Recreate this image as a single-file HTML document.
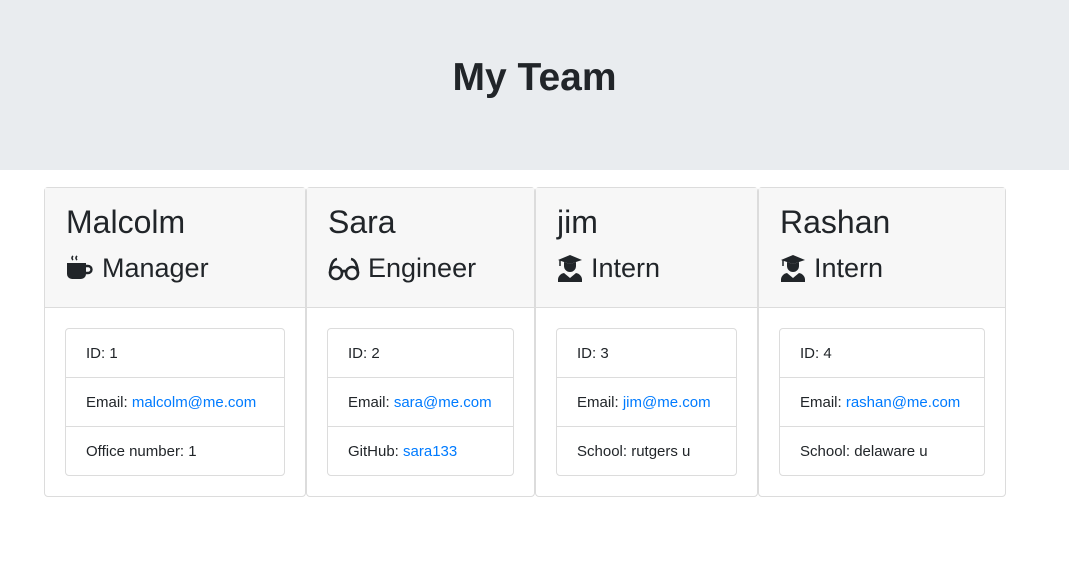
<!DOCTYPE html>
<html><head><style>
body{margin:0;font-family:"Liberation Sans",sans-serif;color:#212529;background:#fff;}
.jt{height:170px;background:#e9ecef;display:flex;align-items:center;justify-content:center;}
.jt h1{margin:0;font-size:39px;font-weight:600;position:relative;top:-7px;}
.row{position:absolute;top:187px;left:44px;display:flex;}
.card{border:1px solid #dcdcdc;border-radius:4px;height:310px;box-sizing:border-box;background:#fff;}
.hd{height:120px;background:#f7f7f7;border-bottom:1px solid #dcdcdc;box-sizing:border-box;padding:14px 20px 0 21px;}
.nm{font-size:32px;font-weight:500;line-height:40px;}
.rl{font-size:27px;font-weight:500;line-height:36px;margin-top:8px;display:flex;align-items:center;}
.rl svg{margin-right:8px;}
.bd{padding:20px;}
ul{list-style:none;margin:0;padding:0;border:1px solid #dcdcdc;border-radius:4px;}
li{height:48px;line-height:50px;padding-left:20px;font-size:15px;border-top:1px solid #dcdcdc;}
li:first-child{border-top:0;}
a{color:#007bff;text-decoration:none;}
</style></head><body>
<div class="jt"><h1>My Team</h1></div>
<div class="row">
<div class="card" style="width:262px"><div class="hd"><div class="nm">Malcolm</div><div class="rl">
<svg width="28" height="28" viewBox="0 0 28 28"><path d="M7 2q-2 2 0 4M11 2q-2 2 0 4" stroke="#212529" stroke-width="1.6" fill="none"/><path d="M1 9h19v11a5 5 0 0 1-5 5h-9a5 5 0 0 1-5-5z" fill="#212529"/><path d="M20 12h2a3.5 3.5 0 0 1 0 7h-2" stroke="#212529" stroke-width="2.4" fill="none"/></svg>Manager</div></div>
<div class="bd"><ul><li>ID: 1</li><li>Email: <a>malcolm@me.com</a></li><li>Office number: 1</li></ul></div></div>
<div class="card" style="width:229px"><div class="hd"><div class="nm">Sara</div><div class="rl">
<svg width="32" height="28" viewBox="0 0 32 28"><g stroke="#212529" stroke-width="2.6" fill="none"><circle cx="8" cy="19" r="6"/><circle cx="24" cy="19" r="6"/><path d="M14 18q2-2 4 0M2 19Q3 6 9 5M30 19Q29 6 23 5"/></g></svg>Engineer</div></div>
<div class="bd"><ul><li>ID: 2</li><li>Email: <a>sara@me.com</a></li><li>GitHub: <a>sara133</a></li></ul></div></div>
<div class="card" style="width:223px"><div class="hd"><div class="nm">jim</div><div class="rl">
<svg width="26" height="28" viewBox="0 0 26 28"><path d="M13 1L25 6L13 10L1 6z" fill="#212529"/><path d="M3 6v6" stroke="#212529" stroke-width="1.5"/><path d="M7 8v4a6 6 0 0 0 12 0V8L13 10z" fill="#212529"/><path d="M1 28v-3a7 7 0 0 1 6-6l6 5 6-5a7 7 0 0 1 6 6v3z" fill="#212529"/></svg>Intern</div></div>
<div class="bd"><ul><li>ID: 3</li><li>Email: <a>jim@me.com</a></li><li>School: rutgers u</li></ul></div></div>
<div class="card" style="width:248px"><div class="hd"><div class="nm">Rashan</div><div class="rl">
<svg width="26" height="28" viewBox="0 0 26 28"><path d="M13 1L25 6L13 10L1 6z" fill="#212529"/><path d="M3 6v6" stroke="#212529" stroke-width="1.5"/><path d="M7 8v4a6 6 0 0 0 12 0V8L13 10z" fill="#212529"/><path d="M1 28v-3a7 7 0 0 1 6-6l6 5 6-5a7 7 0 0 1 6 6v3z" fill="#212529"/></svg>Intern</div></div>
<div class="bd"><ul><li>ID: 4</li><li>Email: <a>rashan@me.com</a></li><li>School: delaware u</li></ul></div></div>
</div>
</body></html>
